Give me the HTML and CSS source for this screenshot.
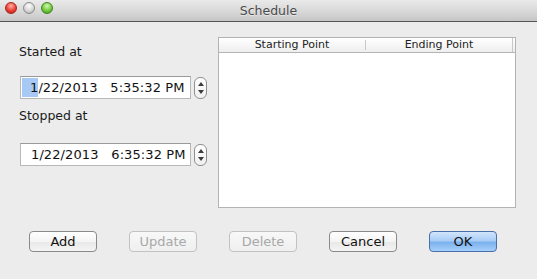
FILE: index.html
```html
<!DOCTYPE html>
<html lang="en">
<head>
    <meta charset="UTF-8">
    <title>Schedule</title>
    <link rel="stylesheet" href="styles.css">
</head>
<body>
    <div class="window">
        <div class="titlebar">
            <div class="lights">
                <span class="light red"></span>
                <span class="light gray"></span>
                <span class="light green"></span>
            </div>
            <div class="title">Schedule</div>
        </div>

        <div class="content">
            <div class="form-col">
                <div class="label first">Started at</div>
                <div class="field-row">
                    <div class="date-field"><span class="sel">1</span>/22/2013&nbsp;&nbsp;&nbsp;5:35:32&nbsp;PM</div>
                    <div class="spinner"><span class="up"></span><span class="down"></span></div>
                </div>
                <div class="label second">Stopped at</div>
                <div class="field-row">
                    <div class="date-field"><span class="nosel">1</span>/22/2013&nbsp;&nbsp;&nbsp;6:35:32&nbsp;PM</div>
                    <div class="spinner"><span class="up"></span><span class="down"></span></div>
                </div>
            </div>

            <div class="table">
                <div class="table-head">
                    <div class="col">Starting Point</div>
                    <div class="col">Ending Point</div>
                    <div class="col-end"></div>
                </div>
                <div class="table-body"></div>
            </div>
        </div>

        <div class="buttons">
            <button class="btn">Add</button>
            <button class="btn disabled">Update</button>
            <button class="btn disabled">Delete</button>
            <button class="btn">Cancel</button>
            <button class="btn default">OK</button>
        </div>
    </div>
</body>
</html>
```

FILE: styles.css
```css
body {
    margin: 0;
    font-family: "DejaVu Sans", "Liberation Sans", sans-serif;
    background: #ececec;
}

.window {
    width: 537px;
    height: 279px;
    background: #ececec;
    overflow: hidden;
}

.titlebar {
    position: relative;
    height: 21px;
    background: linear-gradient(#eaeaea 0%, #d6d6d6 60%, #c6c6c6 100%);
    border-bottom: 1px solid #565656;
}

.lights {
    display: flex;
    gap: 6px;
    padding: 2px 0 0 5px;
}

.light {
    width: 12px;
    height: 12px;
    border-radius: 50%;
    box-sizing: border-box;
}

.light.red {
    background: radial-gradient(circle at 50% 30%, #ffb0a8 0%, #ec3f35 55%, #b51d14 100%);
    border: 1px solid #a4251c;
}

.light.gray {
    background: radial-gradient(circle at 50% 30%, #fdfdfd 0%, #d7d7d7 55%, #a9a9a9 100%);
    border: 1px solid #8d8d8d;
}

.light.green {
    background: radial-gradient(circle at 50% 30%, #d7f6b3 0%, #6fcb3c 55%, #3d8d1b 100%);
    border: 1px solid #3f8520;
}

.title {
    position: absolute;
    left: 0;
    right: 0;
    top: 3px;
    text-align: center;
    font-size: 12.5px;
    color: #4a4a4a;
    text-shadow: 0 1px 0 rgba(255,255,255,0.5);
}

.content {
    display: flex;
    height: 209px;
}

.form-col {
    width: 199px;
    padding-left: 19px;
}

.label {
    font-size: 12.5px;
    color: #1a1a1a;
    height: 16px;
    line-height: 16px;
}

.label.first {
    margin-top: 22px;
    margin-bottom: 16px;
}

.label.second {
    margin-top: 9px;
    margin-bottom: 19px;
}

.field-row {
    display: flex;
    align-items: center;
    gap: 3px;
}

.date-field {
    width: 159px;
    height: 21px;
    border: 1px solid #b8b8b8;
    border-top-color: #9a9a9a;
    background: #fff;
    font-size: 13px;
    letter-spacing: 0.1px;
    line-height: 21px;
    color: #111;
    padding-left: 10px;
    margin-left: 1px;
    white-space: nowrap;
}

.date-field .sel {
    background: #a6c9f5;
    padding-left: 8px;
    margin-left: -9px;
    display: inline-block;
    line-height: 19px;
}

.spinner {
    width: 11px;
    height: 20px;
    border: 1px solid #8f8f8f;
    border-radius: 6px;
    background: linear-gradient(#ffffff, #f0f0f0);
    display: flex;
    flex-direction: column;
    align-items: center;
    justify-content: center;
    gap: 4px;
}

.spinner .up {
    width: 0;
    height: 0;
    border-left: 3px solid transparent;
    border-right: 3px solid transparent;
    border-bottom: 4px solid #3c3c3c;
}

.spinner .down {
    width: 0;
    height: 0;
    border-left: 3px solid transparent;
    border-right: 3px solid transparent;
    border-top: 4px solid #3c3c3c;
}

.table {
    margin-top: 15px;
    width: 296px;
    height: 169px;
    border: 1px solid #b3b3b3;
    background: #fff;
    display: flex;
    flex-direction: column;
}

.table-head {
    display: flex;
    height: 14px;
    background: linear-gradient(#ffffff, #eeeeee);
    border-bottom: 1px solid #b5b5b5;
    font-size: 11px;
    line-height: 14px;
    color: #222;
}

.table-head .col {
    flex: 1;
    text-align: center;
}

.table-head .col:first-child {
    border-right: 1px solid #c8c8c8;
    margin: 2px 0;
    line-height: 10px;
}

.table-head .col-end {
    width: 2px;
    border-left: 1px solid #c8c8c8;
}

.table-body {
    flex: 1;
}

.buttons {
    display: flex;
    gap: 32px;
    padding-left: 29px;
}

.btn {
    width: 68px;
    height: 21px;
    padding: 0;
    font-family: "DejaVu Sans", "Liberation Sans", sans-serif;
    font-size: 13px;
    color: #111;
    background: linear-gradient(#ffffff 0%, #f4f4f4 50%, #e8e8e8 51%, #f4f4f4 100%);
    border: 1px solid #8a8a8a;
    border-radius: 4px;
}

.btn.disabled {
    color: #a8a8a8;
    border-color: #c2c2c2;
    background: linear-gradient(#f8f8f8, #efefef);
}

.btn.default {
    border-color: #4b6fa8;
    background: linear-gradient(#d2e5fb 0%, #a9cdf6 45%, #7cb1ee 55%, #a6d0fa 100%);
}
```
